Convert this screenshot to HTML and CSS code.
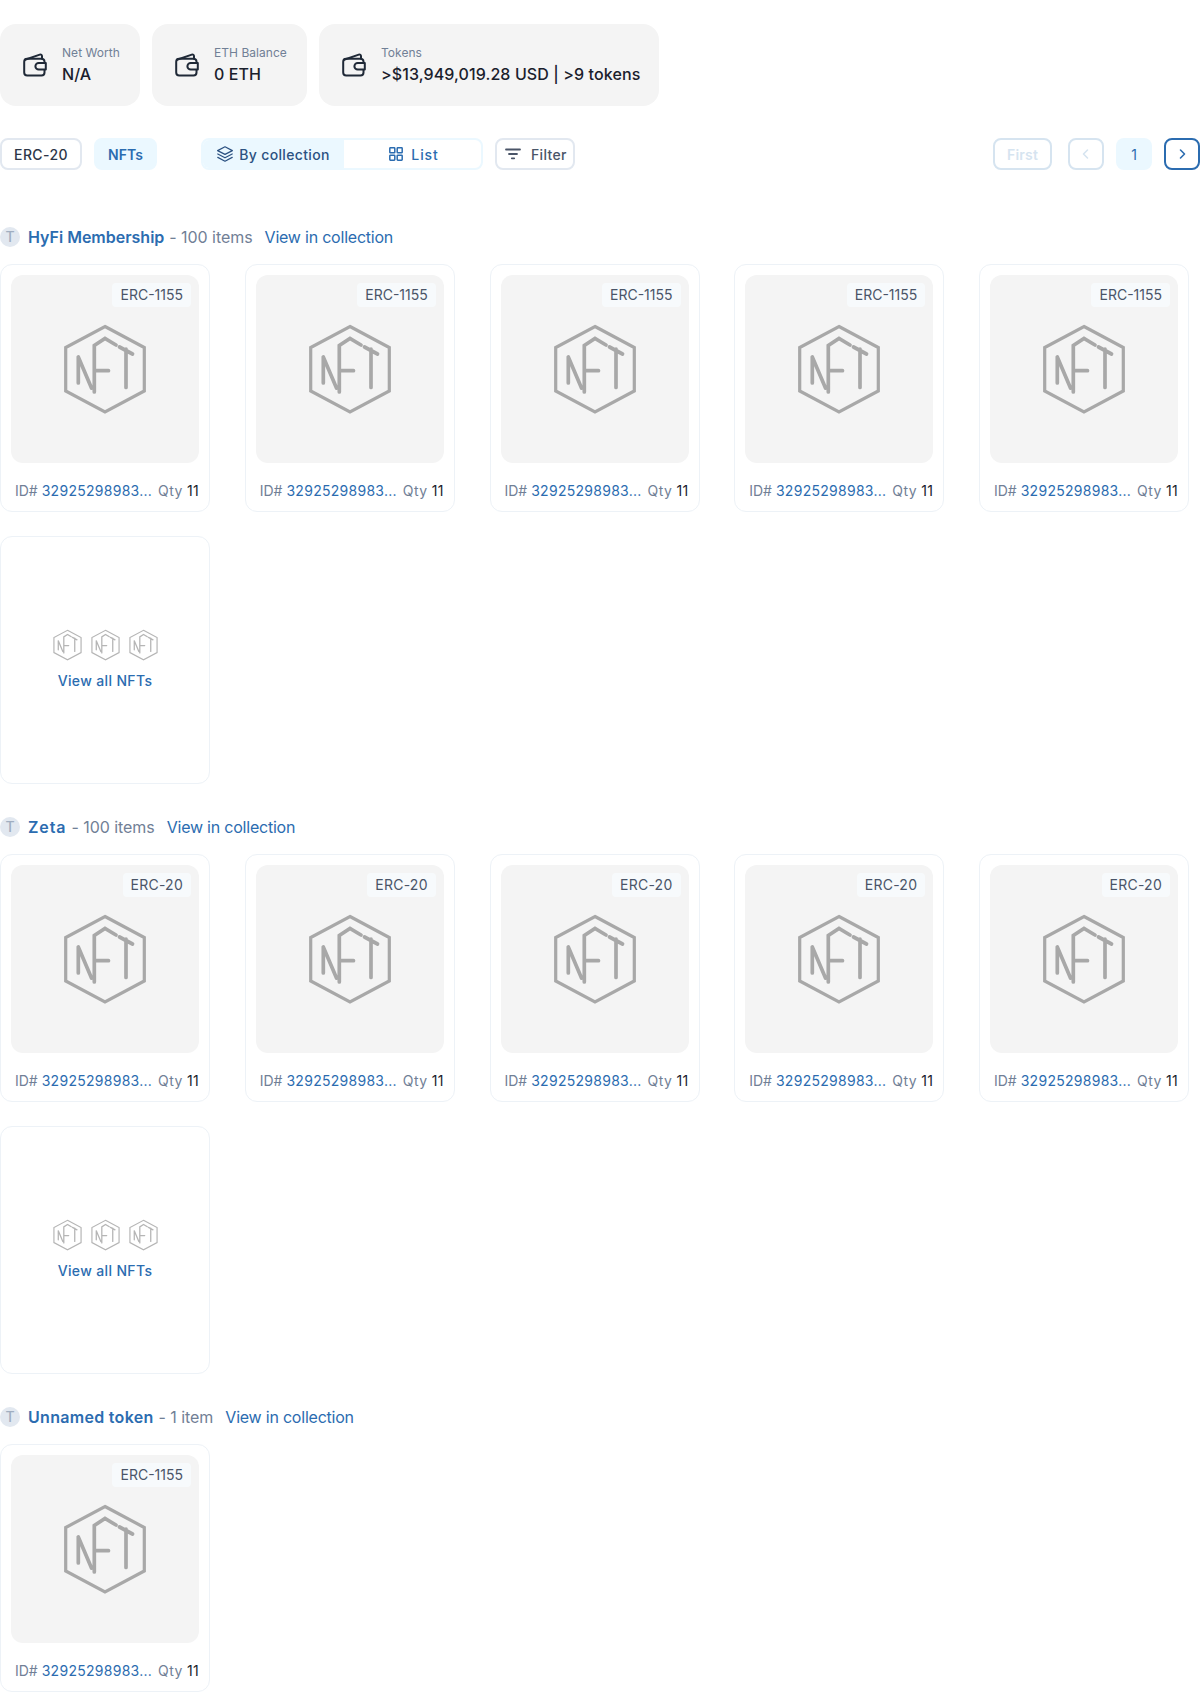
FILE: index.html
```html
<!DOCTYPE html>
<html lang="en">
<head>
<meta charset="utf-8">
<title>Address tokens</title>
<link rel="stylesheet" href="styles.css">
</head>
<body>
<svg class="defs" width="0" height="0" aria-hidden="true">
  <symbol id="nft" viewBox="-2 -2 84 92">
    <g fill="none" stroke="currentColor" stroke-linecap="round" stroke-linejoin="miter">
      <path d="M40 1.5 79.3 22.5V66L40 87 .7 66V22.5Z"/>
      <path class="nft-letters" d="M13.3 32V58M13.3 32 26.5 63M29.3 67V20.5L40 13.5 51 20M29.3 45.7H43.5M54.5 22 67.5 29M61 24V62.5"/>
    </g>
  </symbol>
  <symbol id="wallet" viewBox="0 0 24 24">
    <g fill="none" stroke="currentColor" stroke-width="2" stroke-linejoin="round" stroke-linecap="round">
      <path d="M21.5 9V8.5A3 3 0 0 0 18.5 5.7H4.2A3 3 0 0 0 1.2 8.7V19.5A3 3 0 0 0 4.2 22.5H18.5A3 3 0 0 0 21.5 19.5V17"/>
      <path d="M2 6.8 16.8 1.6C18 1.2 19 2 19 3.2V5.7"/>
      <path d="M22.8 10H15.7A3.3 3.3 0 0 0 15.7 16.6H22.8Z"/>
    </g>
  </symbol>
</svg>

<main class="page">
  <section class="stats">
    <div class="stat">
      <svg class="wallet"><use href="#wallet"/></svg>
      <div class="stat-text"><div class="stat-label">Net Worth</div><div class="stat-value">N/A</div></div>
    </div>
    <div class="stat">
      <svg class="wallet"><use href="#wallet"/></svg>
      <div class="stat-text"><div class="stat-label">ETH Balance</div><div class="stat-value">0 ETH</div></div>
    </div>
    <div class="stat">
      <svg class="wallet"><use href="#wallet"/></svg>
      <div class="stat-text"><div class="stat-label">Tokens</div><div class="stat-value">&gt;$13,949,019.28 USD | &gt;9 tokens</div></div>
    </div>
  </section>

  <section class="toolbar">
    <div class="tool-left">
      <div class="tabs">
        <button class="tab">ERC-20</button>
        <button class="tab tab-active">NFTs</button>
      </div>
      <div class="segment">
        <button class="seg seg-on">
          <svg class="ico" viewBox="0 0 16 16" fill="none" stroke="currentColor" stroke-width="1.2" stroke-linejoin="round" stroke-linecap="round"><path d="M8 .8 15.4 4.6 8 8.4 .6 4.6Z"/><path d="M.8 8 8 11.8 15.2 8"/><path d="M.8 11.4 8 15.2 15.2 11.4"/></svg>
          By collection
        </button>
        <button class="seg seg-list">
          <svg class="ico" viewBox="0 0 16 16" fill="none" stroke="currentColor" stroke-width="1.5"><rect x="1.8" y="1.8" width="5" height="5" rx=".6"/><rect x="9.2" y="1.8" width="5" height="5" rx=".6"/><rect x="1.8" y="9.2" width="5" height="5" rx=".6"/><rect x="9.2" y="9.2" width="5" height="5" rx=".6"/></svg>
          List
        </button>
      </div>
      <button class="filter">
        <svg class="ico" viewBox="0 0 16 16" fill="none" stroke="currentColor" stroke-width="1.8" stroke-linecap="round"><path d="M1 3.5H15M4 8H12M6.8 12.3H9.2"/></svg>
        Filter
      </button>
    </div>
    <nav class="pager">
      <button class="pg pg-first">First</button>
      <button class="pg pg-icon pg-off"><svg class="chev" viewBox="0 0 12 12" fill="none" stroke="currentColor" stroke-width="1.6" stroke-linecap="round" stroke-linejoin="round"><path d="M7.5 2 3.5 6 7.5 10"/></svg></button>
      <span class="pg pg-icon pg-cur">1</span>
      <button class="pg pg-icon pg-next"><svg class="chev" viewBox="0 0 12 12" fill="none" stroke="currentColor" stroke-width="1.6" stroke-linecap="round" stroke-linejoin="round"><path d="M4.5 2 8.5 6 4.5 10"/></svg></button>
    </nav>
  </section>

  <section class="collection">
    <h2 class="coll-head"><span class="avatar">T</span><a class="coll-name">HyFi Membership</a><span class="coll-count">- 100 items</span><a class="coll-link">View in collection</a></h2>
    <div class="grid">
      <article class="card"><div class="thumb"><span class="badge">ERC-1155</span><svg class="nft"><use href="#nft"/></svg></div><div class="meta"><span class="meta-id">ID# <a>32925298983...</a></span><span class="meta-qty">Qty <b>11</b></span></div></article>
      <article class="card"><div class="thumb"><span class="badge">ERC-1155</span><svg class="nft"><use href="#nft"/></svg></div><div class="meta"><span class="meta-id">ID# <a>32925298983...</a></span><span class="meta-qty">Qty <b>11</b></span></div></article>
      <article class="card"><div class="thumb"><span class="badge">ERC-1155</span><svg class="nft"><use href="#nft"/></svg></div><div class="meta"><span class="meta-id">ID# <a>32925298983...</a></span><span class="meta-qty">Qty <b>11</b></span></div></article>
      <article class="card"><div class="thumb"><span class="badge">ERC-1155</span><svg class="nft"><use href="#nft"/></svg></div><div class="meta"><span class="meta-id">ID# <a>32925298983...</a></span><span class="meta-qty">Qty <b>11</b></span></div></article>
      <article class="card"><div class="thumb"><span class="badge">ERC-1155</span><svg class="nft"><use href="#nft"/></svg></div><div class="meta"><span class="meta-id">ID# <a>32925298983...</a></span><span class="meta-qty">Qty <b>11</b></span></div></article>
      <article class="card card-more"><div class="more-icons"><svg class="nft-s"><use href="#nft"/></svg><svg class="nft-s"><use href="#nft"/></svg><svg class="nft-s"><use href="#nft"/></svg></div><a class="more-link">View all NFTs</a></article>
    </div>
  </section>

  <section class="collection">
    <h2 class="coll-head"><span class="avatar">T</span><a class="coll-name coll-name-zeta">Zeta</a><span class="coll-count">- 100 items</span><a class="coll-link">View in collection</a></h2>
    <div class="grid">
      <article class="card"><div class="thumb"><span class="badge badge-20">ERC-20</span><svg class="nft"><use href="#nft"/></svg></div><div class="meta"><span class="meta-id">ID# <a>32925298983...</a></span><span class="meta-qty">Qty <b>11</b></span></div></article>
      <article class="card"><div class="thumb"><span class="badge badge-20">ERC-20</span><svg class="nft"><use href="#nft"/></svg></div><div class="meta"><span class="meta-id">ID# <a>32925298983...</a></span><span class="meta-qty">Qty <b>11</b></span></div></article>
      <article class="card"><div class="thumb"><span class="badge badge-20">ERC-20</span><svg class="nft"><use href="#nft"/></svg></div><div class="meta"><span class="meta-id">ID# <a>32925298983...</a></span><span class="meta-qty">Qty <b>11</b></span></div></article>
      <article class="card"><div class="thumb"><span class="badge badge-20">ERC-20</span><svg class="nft"><use href="#nft"/></svg></div><div class="meta"><span class="meta-id">ID# <a>32925298983...</a></span><span class="meta-qty">Qty <b>11</b></span></div></article>
      <article class="card"><div class="thumb"><span class="badge badge-20">ERC-20</span><svg class="nft"><use href="#nft"/></svg></div><div class="meta"><span class="meta-id">ID# <a>32925298983...</a></span><span class="meta-qty">Qty <b>11</b></span></div></article>
      <article class="card card-more"><div class="more-icons"><svg class="nft-s"><use href="#nft"/></svg><svg class="nft-s"><use href="#nft"/></svg><svg class="nft-s"><use href="#nft"/></svg></div><a class="more-link">View all NFTs</a></article>
    </div>
  </section>

  <section class="collection">
    <h2 class="coll-head"><span class="avatar">T</span><a class="coll-name coll-name-unnamed">Unnamed token</a><span class="coll-count">- 1 item</span><a class="coll-link">View in collection</a></h2>
    <div class="grid">
      <article class="card"><div class="thumb"><span class="badge">ERC-1155</span><svg class="nft"><use href="#nft"/></svg></div><div class="meta"><span class="meta-id">ID# <a>32925298983...</a></span><span class="meta-qty">Qty <b>11</b></span></div></article>
    </div>
  </section>
</main>
</body>
</html>
```

FILE: styles.css
```css
* { box-sizing: border-box; }
html, body { margin: 0; padding: 0; background: #fff; }
body {
  font-family: Inter, "Liberation Sans", sans-serif;
  font-size: 16px;
  color: #1a202c;
  height: 1692px;
  overflow: hidden;
}
.defs { position: absolute; }
.page { padding-top: 24px; }
button { font: inherit; background: none; cursor: pointer; }

.stats { display: flex; gap: 12px; }
.stat {
  display: flex;
  align-items: center;
  gap: 15px;
  height: 82px;
  padding: 0 20px 0 23px;
  background: #f4f4f4;
  border-radius: 16px;
}
.stat:last-child { padding-right: 19px; }
.wallet { width: 24px; height: 24px; color: #1f2937; flex: none; }
.stat-label { font-size: 12px; line-height: 16px; color: #718096; margin-bottom: 1px; letter-spacing: .05px; }
.stat-value { font-size: 16px; line-height: 24px; font-weight: 500; color: #1a202c; white-space: nowrap; letter-spacing: .1px; }

.toolbar { display: flex; justify-content: space-between; margin-top: 32px; height: 32px; }
.tool-left { display: flex; align-items: stretch; }
.tabs { display: flex; gap: 12px; margin-right: 44px; }
.tab {
  width: 82px;
  padding: 0;
  border: 2px solid #e2e8f0;
  border-radius: 8px;
  font-size: 14px;
  font-weight: 500;
  letter-spacing: .4px;
  color: #2d3748;
}
.tab-active { width: 63px; background: #ebf8ff; border-color: #ebf8ff; color: #2b6cb0; font-weight: 600; letter-spacing: 0; }
.segment { display: flex; width: 282px; margin-right: 12px; border: 2px solid #ebf8ff; border-radius: 8px; overflow: hidden; }
.seg {
  flex: 1 1 0;
  display: flex;
  align-items: center;
  justify-content: center;
  gap: 6px;
  padding: 0;
  border: 0;
  font-size: 14px;
  font-weight: 500;
  letter-spacing: .35px;
  color: #2b6cb0;
}
.seg-on { flex: 0 0 141px; background: #ebf8ff; color: #2c5282; }
.seg-list { letter-spacing: .9px; gap: 7px; padding-left: 2px; }
.ico { width: 16px; height: 16px; flex: none; }
.filter {
  display: flex;
  align-items: center;
  gap: 10px;
  width: 80px;
  padding: 0 0 0 8px;
  border: 2px solid #e2e8f0;
  border-radius: 8px;
  font-size: 14px;
  font-weight: 500;
  letter-spacing: .35px;
  color: #4a5568;
}
.pager { display: flex; gap: 12px; }
.pg {
  display: flex;
  align-items: center;
  justify-content: center;
  height: 32px;
  padding: 0;
  border: 2px solid transparent;
  border-radius: 8px;
  font-size: 14px;
  font-weight: 500;
}
.pg-first { width: 59px; margin-right: 4px; border-color: #d6e4f0; color: #d6e4f0; font-weight: 600; letter-spacing: .2px; }
.pg-icon { width: 36px; }
.pg-off { border-color: #d6e4f0; color: #d6e4f0; }
.pg-cur { background: #ebf8ff; color: #2b6cb0; font-weight: 400; }
.pg-next { border-color: #2b6cb0; color: #2b6cb0; }
.chev { width: 12px; height: 12px; }

.collection { margin-top: 31px; }
.toolbar + .collection { margin-top: 55px; }
.coll-head {
  display: flex;
  align-items: center;
  height: 24px;
  margin: 0 0 15px;
  font-size: 16px;
  line-height: 24px;
  font-weight: 400;
}
.avatar {
  display: flex;
  align-items: center;
  justify-content: center;
  width: 20px;
  height: 20px;
  margin-right: 8px;
  border-radius: 50%;
  background: #e2e8f0;
  color: #a0aec0;
  font-size: 14px;
  font-weight: 500;
}
.coll-name { color: #2b6cb0; font-weight: 600; margin-right: 5px; }
.coll-name-zeta { letter-spacing: .9px; }
.coll-name-unnamed { letter-spacing: .3px; }
.coll-count { color: #718096; margin-right: 12px; letter-spacing: -.05px; }
.coll-link { color: #2b6cb0; letter-spacing: -.22px; }

.grid { display: grid; grid-template-columns: repeat(5, 210px); column-gap: 34.75px; row-gap: 24px; }
.card {
  height: 248px;
  padding: 10px;
  border: 1px solid #edf2f7;
  border-radius: 12px;
  background: #fff;
}
.thumb {
  position: relative;
  display: flex;
  align-items: center;
  justify-content: center;
  width: 188px;
  height: 188px;
  background: #f4f4f4;
  border-radius: 12px;
}
.badge {
  position: absolute;
  top: 8px;
  right: 8px;
  padding: 0 8px;
  height: 24px;
  border-radius: 4px;
  background: #f7fafc;
  color: #4a5568;
  font-size: 14px;
  line-height: 24px;
}
.badge-20 { letter-spacing: .25px; }
.nft { width: 84px; height: 92px; color: #a8a8a8; stroke-width: 3.2; }
.nft-letters { stroke-width: 3.7; }
.meta {
  display: flex;
  justify-content: space-between;
  width: 188px;
  margin-top: 17px;
  padding-left: 4px;
  font-size: 14px;
  line-height: 22px;
  color: #718096;
  white-space: nowrap;
}
.meta a { color: #2b6cb0; letter-spacing: .28px; }
.meta-qty { letter-spacing: .4px; }
.meta b { font-weight: 400; color: #1a202c; letter-spacing: .3px; }

.card-more { display: flex; flex-direction: column; align-items: center; justify-content: center; padding: 0; gap: 10px; }
.more-icons { display: flex; gap: 9px; }
.nft-s { width: 29px; height: 32px; color: #b5b5b5; stroke-width: 3.4; }
.more-link { font-size: 14px; line-height: 20px; font-weight: 500; color: #2b6cb0; letter-spacing: .35px; }
```
